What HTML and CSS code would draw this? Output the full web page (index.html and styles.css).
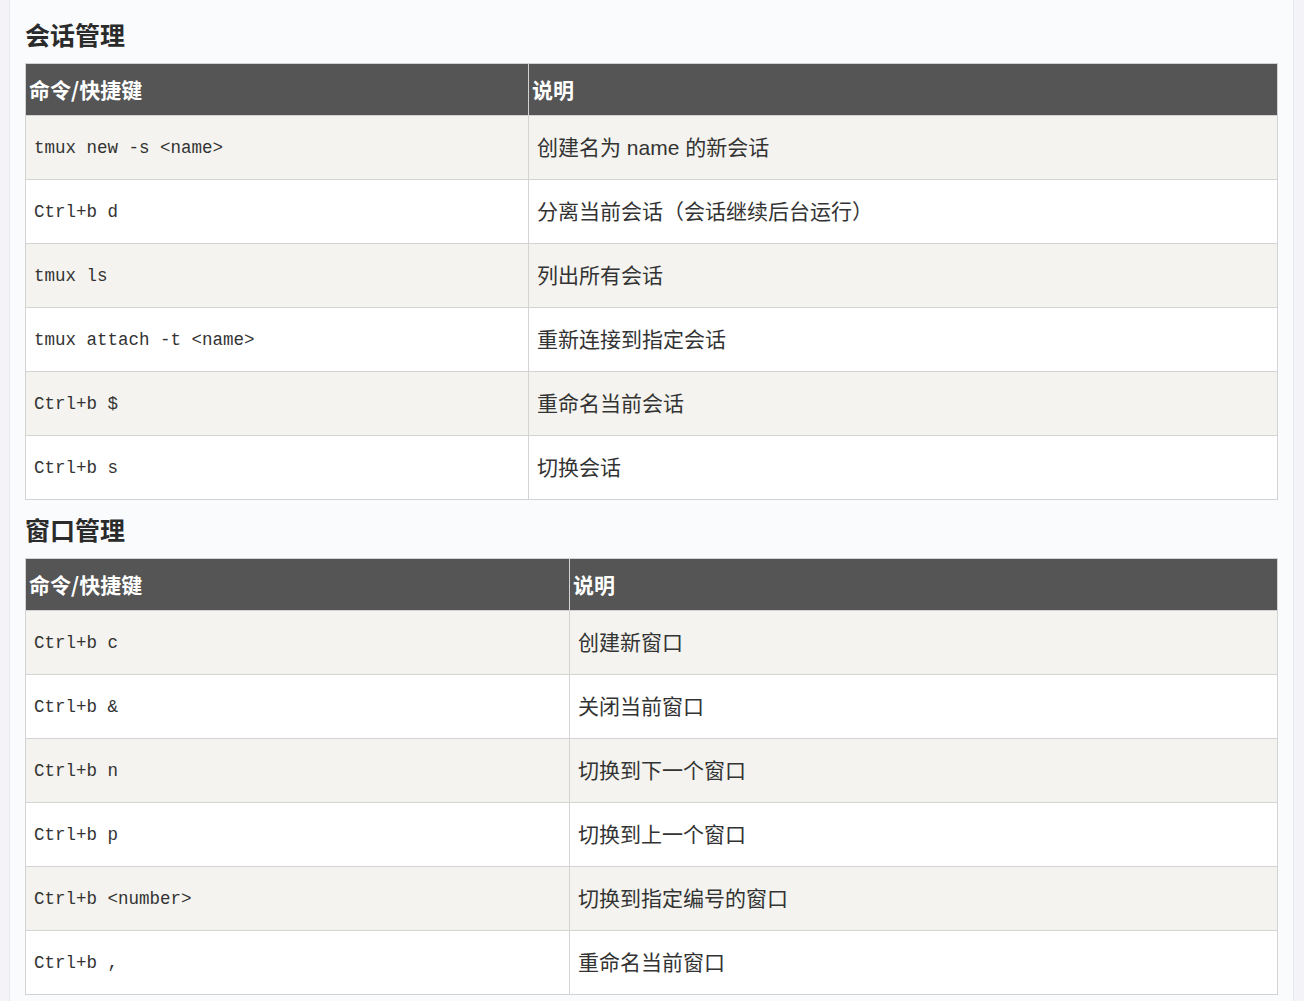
FILE: index.html
```html
<!DOCTYPE html>
<html lang="zh-CN">
<head>
<meta charset="utf-8">
<title>tmux 命令</title>
<link rel="stylesheet" href="styles.css">
</head>
<body>
<main class="page">
  <h2 class="section-title">会话管理</h2>
  <table class="cmd-table t-session">
    <thead>
      <tr><th class="c1">命令/快捷键</th><th>说明</th></tr>
    </thead>
    <tbody>
      <tr><td class="code">tmux new -s &lt;name&gt;</td><td>创建名为 name 的新会话</td></tr>
      <tr><td class="code">Ctrl+b d</td><td>分离当前会话（会话继续后台运行）</td></tr>
      <tr><td class="code">tmux ls</td><td>列出所有会话</td></tr>
      <tr><td class="code">tmux attach -t &lt;name&gt;</td><td>重新连接到指定会话</td></tr>
      <tr><td class="code">Ctrl+b $</td><td>重命名当前会话</td></tr>
      <tr><td class="code">Ctrl+b s</td><td>切换会话</td></tr>
    </tbody>
  </table>
  <h2 class="section-title second">窗口管理</h2>
  <table class="cmd-table t-window">
    <thead>
      <tr><th class="c1">命令/快捷键</th><th>说明</th></tr>
    </thead>
    <tbody>
      <tr><td class="code">Ctrl+b c</td><td>创建新窗口</td></tr>
      <tr><td class="code">Ctrl+b &amp;</td><td>关闭当前窗口</td></tr>
      <tr><td class="code">Ctrl+b n</td><td>切换到下一个窗口</td></tr>
      <tr><td class="code">Ctrl+b p</td><td>切换到上一个窗口</td></tr>
      <tr><td class="code">Ctrl+b &lt;number&gt;</td><td>切换到指定编号的窗口</td></tr>
      <tr><td class="code">Ctrl+b ,</td><td>重命名当前窗口</td></tr>
    </tbody>
  </table>
</main>
</body>
</html>
```
FILE: styles.css
```css
html, body {
  margin: 0;
  padding: 0;
  background: #f3f3f8;
  height: 100%;
}
body {
  font-family: "Liberation Sans", "Noto Sans CJK SC", sans-serif;
  color: #333;
}
.page {
  margin: 0 10px 0 9px;
  border-left: 1px solid #e8e8ee;
  border-right: 1px solid #e8e8ee;
  background: #fafbfd;
  padding: 19px 15px 20px 15px;
  min-height: 100%;
  box-sizing: border-box;
}
.section-title {
  font-family: "Noto Sans CJK SC", sans-serif;
  font-size: 25px;
  font-weight: 700;
  line-height: 30px;
  margin: 0 0 14px 0;
  color: #2b2b2b;
}
.section-title.second {
  margin-top: 14px;
}
.cmd-table {
  width: 100%;
  border-collapse: collapse;
  table-layout: fixed;
  border: 1px solid #d3d3d3;
}
.cmd-table th {
  background: #555555;
  color: #fff;
  font-family: "Noto Sans CJK SC", sans-serif;
  font-weight: 700;
  font-size: 21px;
  text-align: left;
  line-height: 31px;
  padding: 10px 3px;
  border: 1px solid #d3d3d3;
}
.t-session th.c1 { width: 496px; }
.t-window th.c1 { width: 537px; }
.cmd-table td {
  font-size: 21px;
  line-height: 31px;
  padding: 16px 8px;
  border: 1px solid #d3d3d3;
  background: #fff;
  color: #333;
}
.cmd-table tbody tr:nth-child(odd) td {
  background: #f4f3ef;
}
.cmd-table td.code {
  font-family: "Liberation Mono", monospace;
  font-size: 17.5px;
  color: #333;
  white-space: pre;
  padding-top: 17px;
  padding-bottom: 15px;
}
```
